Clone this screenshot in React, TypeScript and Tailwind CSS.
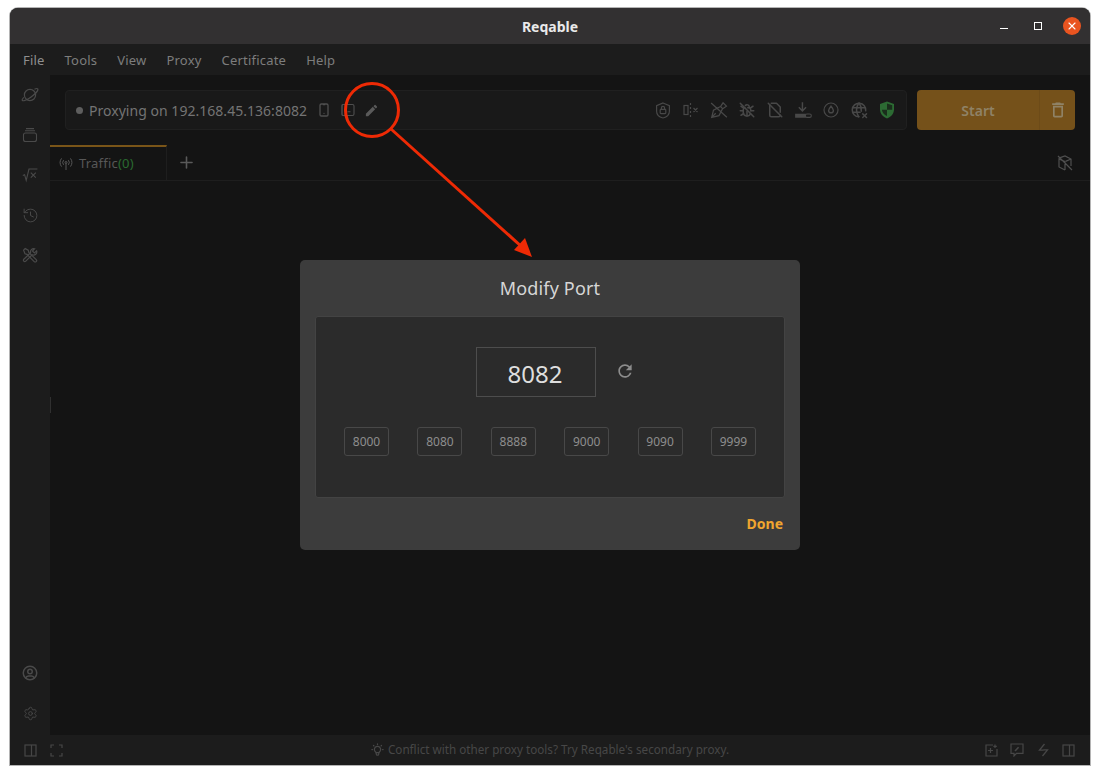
import {
  TbBugOff,
  TbDeviceMobile,
  TbFileOff,
  TbUserCircle,
  TbWorldX,
  TbBulb,
  TbPlus,
} from "react-icons/tb";
import { MdEdit, MdRefresh, MdOutlineDelete } from "react-icons/md";
import { History, Settings, X } from "lucide-react";
import type { ReactNode } from "react";

const FONT = "font-['Noto_Sans','Open_Sans',sans-serif]";

const menuItems = ["File", "Tools", "View", "Proxy", "Certificate", "Help"];
const ports = ["8000", "8080", "8888", "9000", "9090", "9999"];

function Planet() {
  return (
    <svg width="18" height="18" viewBox="0 0 18 18" fill="none" stroke="currentColor" strokeWidth="1.2">
      <circle cx="9" cy="9" r="5.6" />
      <path d="M13.5 3.2c1.6-.8 2.8-.9 3.2-.3.8 1.3-2.2 4.9-6.6 8s-8 4.6-8.8 3.4c-.4-.6.2-1.7 1.5-3" />
    </svg>
  );
}

function Stack() {
  return (
    <svg width="16" height="16" viewBox="0 0 16 16" fill="none" stroke="currentColor" strokeWidth="1.1">
      <rect x="1.5" y="6" width="13" height="8.5" rx="2" />
      <path d="M3 3.8h10M4 1.6h8" />
    </svg>
  );
}

function Sqrt() {
  return (
    <svg width="16" height="16" viewBox="0 0 16 16" fill="none" stroke="currentColor" strokeWidth="1.1">
      <path d="M.8 8.5l1.8-.8 1.6 5.6L7 2h8.4M8.8 5.6l5 5M13.8 5.6l-5 5" />
    </svg>
  );
}

function CrossedTools() {
  return (
    <svg width="16" height="16" viewBox="0 0 16 16" fill="none" stroke="currentColor" strokeWidth="1.2">
      <path d="M1.6 3.2L3.2 1.6l3 1.6.6 2.2 7.4 7.2a1.4 1.4 0 0 1-2 2L5 7.4l-2-.6z" />
      <path d="M14.6 3.8l-2.2 2.2-2-2 2.2-2.2a3.2 3.2 0 0 0-4 4L1.8 12.2a1.4 1.4 0 0 0 2 2l6.4-6.4a3.2 3.2 0 0 0 4.4-4z" />
    </svg>
  );
}

function ShieldLock() {
  return (
    <svg width="16" height="17" viewBox="0 0 16 17" fill="none" stroke="currentColor" strokeWidth="1.2">
      <path d="M8 1l6.4 2.6v5.6c0 3.2-2.6 5.8-6.4 6.8-3.8-1-6.4-3.6-6.4-6.8V3.6z" />
      <rect x="5.2" y="7.4" width="5.6" height="4.2" rx="0.8" />
      <path d="M6.4 7.4V6a1.6 1.6 0 0 1 3.2 0v1.4" />
    </svg>
  );
}

function SplitX() {
  return (
    <svg width="16" height="16" viewBox="0 0 16 16" fill="none" stroke="currentColor" strokeWidth="1.2">
      <rect x="1" y="3.5" width="4" height="9" />
      <path d="M7.5 1v2M7.5 5v2M7.5 9v2M7.5 13v2M10.5 6l4 4M14.5 6l-4 4" />
    </svg>
  );
}

function PenOff() {
  return (
    <svg width="18" height="18" viewBox="0 0 16 16" fill="none" stroke="currentColor" strokeWidth="1.1">
      <path d="M1.5 14.5l1.6-6.4 6.3-3.2 1.8 1.8-3.2 6.3zM1.5 14.5l3.6-3.6M9.6 4.6l2-3 3 3-3 2M1 1.8l14 12.6" />
    </svg>
  );
}

function DownloadToggle() {
  return (
    <svg width="18" height="18" viewBox="0 0 16 16" fill="none" stroke="currentColor" strokeWidth="1.3">
      <path d="M7.5 1v7.6M4.3 5.6l3.2 3.2 3.2-3.2" />
      <path d="M1 11.4h9.5v3.4H1z" fill="currentColor" stroke="none" />
      <rect x="10" y="11.6" width="5.4" height="3" rx="1.5" strokeWidth="1" />
    </svg>
  );
}

function DropCircle() {
  return (
    <svg width="16" height="16" viewBox="0 0 16 16" fill="none" stroke="currentColor" strokeWidth="1.2">
      <circle cx="8" cy="8" r="7" />
      <path d="M8 4.2c1.5 1.8 2.4 3 2.4 4.2a2.4 2.4 0 0 1-4.8 0c0-1.2.9-2.4 2.4-4.2z" strokeWidth="1.4" />
    </svg>
  );
}

function ShieldGreen() {
  return (
    <svg width="16" height="18" viewBox="0 0 16 18">
      <path d="M8 .5l7 2.6v5.2c0 4.3-2.9 7.7-7 9.2-4.1-1.5-7-4.9-7-9.2V3.1z" fill="#2c6b33" />
      <path d="M8 2.4v6.4h5.2V4.3zM8 8.8H2.9c.3 2.8 2.3 5 5.1 6.3z" fill="#1a2e1c" />
    </svg>
  );
}

function TabletDash() {
  return (
    <svg width="14" height="14" viewBox="0 0 14 14" fill="none" stroke="currentColor" strokeWidth="1.1">
      <rect x="1" y="1.5" width="12" height="11" rx="1.5" />
      <path d="M1 1.5h3v11H1z" strokeWidth="0.8" />
      <path d="M6.5 8.8h3" />
    </svg>
  );
}

function Antenna() {
  return (
    <svg width="14" height="14" viewBox="0 0 14 14" fill="none" stroke="currentColor" strokeWidth="1">
      <circle cx="7" cy="5.5" r="1" />
      <path d="M7 6.5v6.5M4.6 3.2a3.6 3.6 0 0 0 0 4.6M9.4 3.2a3.6 3.6 0 0 1 0 4.6M2.6 1.4a6.2 6.2 0 0 0 0 8.2M11.4 1.4a6.2 6.2 0 0 1 0 8.2" />
    </svg>
  );
}

function CubeOff() {
  return (
    <svg width="16" height="16" viewBox="0 0 16 16" fill="none" stroke="currentColor" strokeWidth="1.2">
      <path d="M3.2 2.6L8 1l6 3v7M14 4L8.6 6.4M8 6.6V15M8 15l-6-3V4l6 2.6M1 1l14 14" />
    </svg>
  );
}

function Columns() {
  return (
    <svg width="13" height="13" viewBox="0 0 13 13" fill="none" stroke="currentColor" strokeWidth="1.2">
      <rect x="1" y="1" width="11" height="11" />
      <path d="M7.5 1v11" />
    </svg>
  );
}

function Corners() {
  return (
    <svg width="13" height="13" viewBox="0 0 13 13" fill="none" stroke="currentColor" strokeWidth="1.2">
      <path d="M1 4V1h3M9 1h3v3M12 9v3H9M4 12H1V9" />
    </svg>
  );
}

function ImagePlus() {
  return (
    <svg width="13" height="13" viewBox="0 0 13 13" fill="none" stroke="currentColor" strokeWidth="1.2">
      <path d="M8 1H1v11h11V5M3 6.5h5M5.5 4v5M10 .6v3.4M8.4 2.3h3.4" />
    </svg>
  );
}

function MessageEdit() {
  return (
    <svg width="14" height="14" viewBox="0 0 14 14" fill="none" stroke="currentColor" strokeWidth="1.2">
      <path d="M1 1h12v9.4H6.5L4 13v-2.6H1z" />
      <path d="M5 8l3.6-3.8" strokeWidth="1.6" />
    </svg>
  );
}

function Bolt() {
  return (
    <svg width="11" height="14" viewBox="0 0 11 14" fill="none" stroke="currentColor" strokeWidth="1.3">
      <path d="M6.5 1L1.5 7.2h4M5.5 6.8h4L4.5 13" />
    </svg>
  );
}

function SideIcon({ children }: { children: ReactNode }) {
  return <div className="flex items-center justify-center h-[40px]">{children}</div>;
}

function BarIcon({ children }: { children: ReactNode }) {
  return <div className="flex items-center justify-center w-[18px]">{children}</div>;
}

export default function App() {
  return (
    <div className={`relative w-[1100px] h-[775px] bg-white pt-2 px-[10px] pb-[10px] ${FONT}`}>
      <div className="relative flex flex-col h-full bg-[#141414] rounded-t-[8px] overflow-hidden shadow-[0_0_0_1px_#b4b4b4]">
        {/* Title bar */}
        <div className="relative flex items-center justify-center h-[36px] shrink-0 bg-[#323031]">
          <span className="text-[14px] font-bold text-[#e9e9e9]">Reqable</span>
          <div className="absolute right-[9px] top-[9px] flex items-center gap-[16px]">
            <span className="flex items-center justify-center w-[18px] h-[18px] pt-[4px]">
              <span className="w-[8px] h-[1px] bg-white" />
            </span>
            <span className="flex items-center justify-center w-[18px] h-[18px]">
              <span className="w-[8px] h-[8px] border border-white" />
            </span>
            <span className="flex items-center justify-center w-[18px] h-[18px] rounded-full bg-[#e95420]">
              <X className="w-3 h-3 text-white" strokeWidth={2.2} />
            </span>
          </div>
        </div>

        {/* Menu bar */}
        <div className="flex items-center gap-[20px] h-[31px] shrink-0 pt-[2px] px-[13px] bg-[#1c1c1c] text-[13px] tracking-[0.2px] text-[#7d7d7d]">
          {menuItems.map((m) => (
            <span key={m} className={m === "File" ? "text-[#8f8f8f]" : ""}>
              {m}
            </span>
          ))}
        </div>

        <div className="flex flex-1 min-h-0">
          {/* Sidebar */}
          <div className="flex flex-col justify-between w-[40px] shrink-0 bg-[#1c1c1c] text-[#4a4a4a] pb-[2px]">
            <div>
              <SideIcon><Planet /></SideIcon>
              <SideIcon><Stack /></SideIcon>
              <SideIcon><Sqrt /></SideIcon>
              <SideIcon><History className="w-[17px] h-[17px]" strokeWidth={1.4} /></SideIcon>
              <SideIcon><CrossedTools /></SideIcon>
            </div>
            <div>
              <SideIcon><TbUserCircle className="w-[18px] h-[18px]" /></SideIcon>
              <SideIcon><Settings className="w-[15px] h-[15px]" strokeWidth={1.4} /></SideIcon>
            </div>
          </div>

          {/* Main area */}
          <div className="relative flex flex-col flex-1 min-w-0">
            {/* splitter handle */}
            <div className="absolute left-0 top-[322px] w-px h-[16px] bg-[#303030]" />

            <div className="flex gap-[10px] pt-[15px] px-[15px] h-[70px] shrink-0">
              <div className="flex items-center flex-1 h-[40px] pl-[10px] pr-[10px] rounded-[4px] bg-[#191919] border border-[#202020]">
                <span className="w-[7px] h-[7px] rounded-full bg-[#5e5e5e]" />
                <span className="ml-[6px] text-[14px] tracking-[0.03px] text-[#747474]">Proxying on 192.168.45.136:8082</span>
                <div className="flex items-center gap-[9px] ml-[9px] text-[#4f4f4f]">
                  <TbDeviceMobile className="w-[16px] h-[16px]" />
                  <TabletDash />
                  <MdEdit className="w-[15px] h-[15px] text-[#5a5a5a]" />
                </div>
                <div className="flex items-center gap-[10px] ml-auto text-[#484848]">
                  <BarIcon><ShieldLock /></BarIcon>
                  <BarIcon><SplitX /></BarIcon>
                  <BarIcon><PenOff /></BarIcon>
                  <BarIcon><TbBugOff className="w-[18px] h-[18px]" /></BarIcon>
                  <BarIcon><TbFileOff className="w-[18px] h-[18px]" /></BarIcon>
                  <BarIcon><DownloadToggle /></BarIcon>
                  <BarIcon><DropCircle /></BarIcon>
                  <BarIcon><TbWorldX className="w-[18px] h-[18px]" /></BarIcon>
                  <BarIcon><ShieldGreen /></BarIcon>
                </div>
              </div>
              <div className="flex w-[158px] h-[40px] shrink-0 rounded-[4px] bg-[#75511a] text-[#8f8266]">
                <div className="flex items-center justify-center flex-1 text-[14px] font-semibold">Start</div>
                <div className="flex items-center justify-center w-[36px] border-l border-[#6d4b18]">
                  <MdOutlineDelete className="w-[20px] h-[20px]" />
                </div>
              </div>
            </div>

            {/* Tabs */}
            <div className="flex items-stretch h-[36px] shrink-0 border-b border-[#1e1e1e]">
              <div className="flex items-center w-[117px] pl-[9px] gap-[6px] pt-[1px] border-t-2 border-r border-t-[#7a5518] border-r-[#1e1e1e] text-[13px] tracking-[0.2px] text-[#575757]">
                <Antenna />
                <span>
                  Traffic<span className="text-[#2a6b30]">(0)</span>
                </span>
              </div>
              <div className="flex items-center ml-[10px] text-[#5a5a5a]">
                <TbPlus className="w-[19px] h-[19px]" />
              </div>
              <div className="flex items-center ml-auto pr-[17px] text-[#4f4f4f]">
                <CubeOff />
              </div>
            </div>

            <div className="flex-1" />
          </div>
        </div>

        {/* Status bar */}
        <div className="flex items-center h-[30px] shrink-0 px-[14px] bg-[#1c1c1c] text-[#464646]">
          <div className="flex flex-1 items-center gap-[13px]">
            <Columns />
            <Corners />
          </div>
          <div className="flex items-center gap-[3px] text-[11.7px] text-[#474747]">
            <TbBulb className="w-[15px] h-[15px]" />
            <span>Conflict with other proxy tools? Try Reqable's secondary proxy.</span>
          </div>
          <div className="flex flex-1 items-center justify-end gap-[12px] pr-[1px]">
            <ImagePlus />
            <MessageEdit />
            <div className="flex justify-center w-[14px]"><Bolt /></div>
            <Columns />
          </div>
        </div>

        {/* Modify Port dialog */}
        <div className="absolute inset-x-0 top-[252px] flex justify-center">
          <div className="flex flex-col w-[500px] h-[290px] px-[15px] rounded-[5px] bg-[#3c3c3c]">
            <div className="flex items-center justify-center h-[56px] shrink-0 text-[18px] tracking-[0.15px] text-[#d6d6d6]">
              Modify Port
            </div>
            <div className="flex flex-col h-[182px] rounded-[3px] bg-[#2b2b2b] border border-[#434343]">
              <div className="relative flex justify-center pt-[30px]">
                <div className="flex items-end justify-center w-[120px] h-[50px] pb-[4px] pr-[2px] -translate-x-[14px] border border-[#4d4d4d] text-[24px] text-[#dedede]">
                  8082
                </div>
                <MdRefresh className="absolute left-[299px] top-[44px] w-[20px] h-[20px] text-[#8c8c8c]" />
              </div>
              <div className="flex justify-between px-[28px] mt-[30px]">
                {ports.map((p) => (
                  <div
                    key={p}
                    className="flex items-center justify-center w-[45px] h-[29px] rounded-[3px] border border-[#484848] text-[12px] text-[#8e8e8e]"
                  >
                    {p}
                  </div>
                ))}
              </div>
            </div>
            <div className="flex justify-end items-center pr-[2px] pb-[2px] h-[52px] text-[14px] font-bold text-[#f0a52f]">
              Done
            </div>
          </div>
        </div>
      </div>

      {/* Red annotation drawn over the screenshot */}
      <svg className="absolute inset-0 pointer-events-none" width="1100" height="775" viewBox="0 0 1100 775" fill="none">
        <circle cx="372" cy="110" r="26.5" stroke="#ee2a05" strokeWidth="3" />
        <path d="M391 129L522 247" stroke="#ee2a05" strokeWidth="3" />
        <path d="M532 257L514 250L525 238Z" fill="#ee2a05" />
      </svg>
    </div>
  );
}
